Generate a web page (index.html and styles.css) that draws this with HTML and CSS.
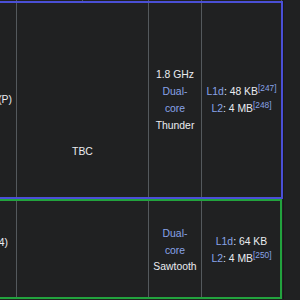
FILE: index.html
```html
<!DOCTYPE html>
<html lang="en">
<head>
<meta charset="utf-8">
<title>Processor table</title>
<link rel="stylesheet" href="styles.css">
</head>
<body>
<div class="spec">
  <div class="cell col1 row0"></div>
  <div class="cell col2 row0 split"><span class="half"></span><span></span></div>
  <div class="cell col3 row0"></div>
  <div class="cell col4 row0"></div>
  <div class="edge"></div>

  <div class="cell col1 row1 lead lead-a"><span>(P)</span></div>
  <div class="cell col2 tbc">TBC</div>
  <div class="cell col3 row1 mid mid-a">
    <span>1.8 GHz</span>
    <a href="#">Dual-core</a>
    <span>Thunder</span>
  </div>
  <div class="cell col4 row1 mid mid-a">
    <div class="line"><a href="#">L1d</a>: 48 KB<sup><a href="#">[247]</a></sup></div>
    <div class="line"><a href="#">L2</a>: 4 MB<sup><a href="#">[248]</a></sup></div>
  </div>
  <div class="frame frame-blue"></div>

  <div class="cell col1 row2 lead lead-b"><span>4)</span></div>
  <div class="cell col3 row2 mid mid-b">
    <a href="#">Dual-core</a>
    <span>Sawtooth</span>
  </div>
  <div class="cell col4 row2 mid mid-b">
    <div class="line"><a href="#">L1d</a>: 64 KB</div>
    <div class="line"><a href="#">L2</a>: 4 MB<sup><a href="#">[250]</a></sup></div>
  </div>
  <div class="frame frame-green"></div>
</div>
</body>
</html>
```

FILE: styles.css
```css
html, body {
  margin: 0;
  padding: 0;
  background: #202122;
  overflow: hidden;
}

body {
  font-family: "Liberation Sans", Arial, sans-serif;
  font-size: 10.4px;
  line-height: 16.8px;
  color: #eaecf0;
}

a {
  color: #88a3e8;
  text-decoration: none;
}

.spec {
  display: grid;
  grid-template-columns: 17px 132px 53px 80px 1px 1px;
  grid-template-rows: 1px 198px 100px;
}

.cell {
  box-sizing: border-box;
  border-right: 1px solid #54595d;
  min-width: 0;
}

.col1 { grid-column: 1; }
.col2 { grid-column: 2; }
.col3 { grid-column: 3; }
.col4 { grid-column: 4; }
.row0 { grid-row: 1; }
.row1 { grid-row: 2; }
.row2 { grid-row: 3; }

.edge {
  grid-column: 6;
  grid-row: 1 / 4;
  background: #18191a;
}

.split {
  display: flex;
}
.half {
  flex: 0 0 66px;
  box-sizing: border-box;
  border-right: 1px solid #54595d;
}

.lead {
  display: flex;
  flex-direction: column;
  justify-content: center;
  align-items: flex-end;
  padding-right: 4px;
  white-space: nowrap;
}
.lead-a { padding-top: 1px; }
.lead-b { padding-bottom: 11px; }
.lead-b span { margin-right: 4px; }

.tbc {
  grid-row: 2 / 4;
  display: flex;
  align-items: center;
  justify-content: center;
  padding-top: 4px;
}

.mid {
  display: flex;
  flex-direction: column;
  justify-content: center;
  align-items: center;
  text-align: center;
  padding: 0 4px;
}
.mid-a { padding-top: 2px; }
.mid-b { padding-top: 4px; }

.line {
  white-space: nowrap;
}

sup {
  font-size: 80%;
  line-height: 0;
  vertical-align: super;
}

.frame {
  grid-column: 1 / 5;
  pointer-events: none;
  z-index: 1;
}
.frame-blue {
  grid-row: 2;
  margin-right: -1px;
  box-shadow: inset 0 2px 0 #4a4fd6, inset -2px 0 0 #4a4fd6, inset 0 -2px 0 #4a4fd6;
}
.frame-green {
  grid-row: 3;
  box-shadow: inset 0 2px 0 #22a33e, inset -2px 0 0 #22a33e, inset 0 -2px 0 #22a33e;
}
```
